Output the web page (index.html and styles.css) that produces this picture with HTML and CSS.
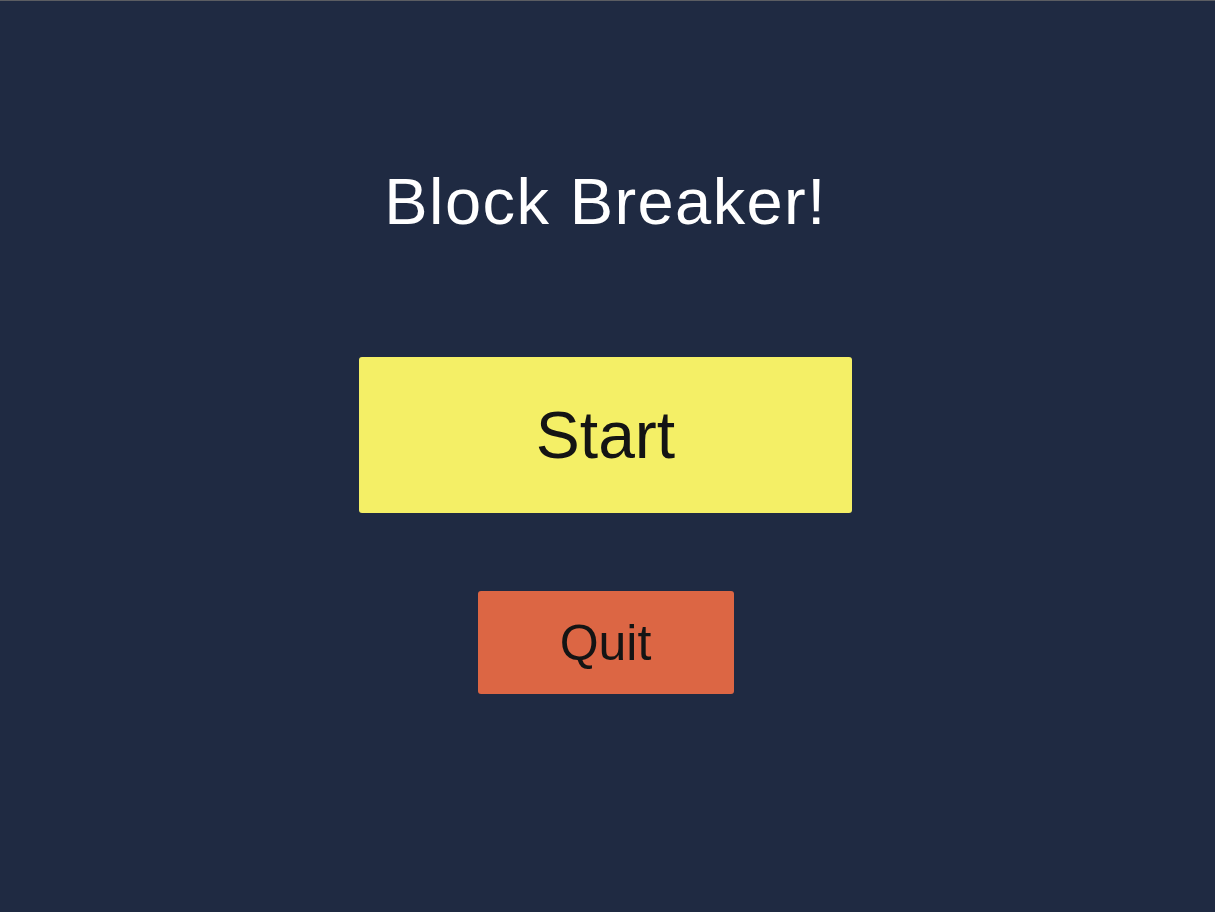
FILE: index.html
```html
<!DOCTYPE html>
<html lang="en">
<head>
<meta charset="utf-8">
<title>Block Breaker!</title>
<link rel="stylesheet" href="styles.css">
</head>
<body>
<main class="menu">
  <h1 class="title">Block Breaker!</h1>
  <button class="btn btn-start" type="button">Start</button>
  <button class="btn btn-quit" type="button">Quit</button>
</main>
</body>
</html>
```
FILE: styles.css
```css
html, body {
  margin: 0;
  height: 100%;
}
body {
  background: #1f2a42;
  border-top: 1px solid #5b5d62;
  box-sizing: border-box;
  font-family: "Liberation Sans", Arial, sans-serif;
}
.menu {
  display: flex;
  flex-direction: column;
  align-items: center;
  padding-top: 165px;
  padding-right: 4px;
}
.title {
  margin: 0;
  color: #ffffff;
  font-weight: 400;
  font-size: 65px;
  letter-spacing: 1.4px;
  line-height: 72px;
  height: 75px;
}
.btn {
  border: none;
  border-radius: 3px;
  font-family: "Liberation Sans", Arial, sans-serif;
  color: #141414;
  padding: 0;
  display: flex;
  align-items: center;
  justify-content: center;
}
.btn-start {
  margin-top: 116px;
  width: 493px;
  height: 156px;
  background: #f4ef66;
  font-size: 66px;
}
.btn-quit {
  margin-top: 78px;
  width: 256px;
  height: 103px;
  background: #dc6644;
  font-size: 50px;
}
```
